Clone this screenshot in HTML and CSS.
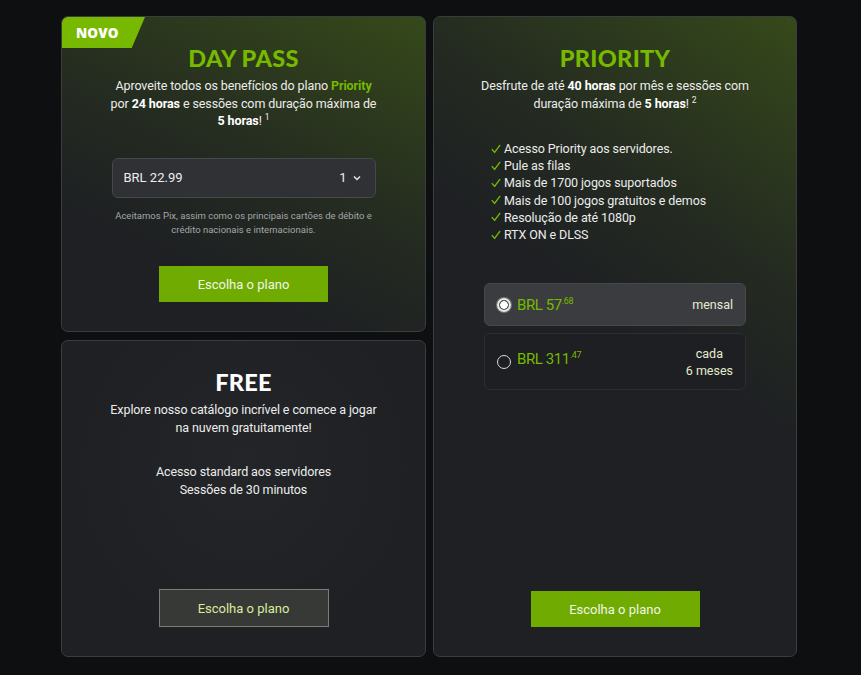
FILE: index.html
```html
<!DOCTYPE html>
<html lang="pt-BR">
<head>
<meta charset="utf-8">
<link rel="stylesheet" href="styles.css">
</head>
<body>
<main class="plans">
  <section class="card card-daypass">
    <div class="badge">NOVO</div>
    <h2 class="title title-green">DAY PASS</h2>
    <p class="desc">Aproveite todos os benefícios do plano <b class="hl">Priority</b><br>por <b>24 horas</b> e sessões com duração máxima de<br><b>5 horas</b>! <sup>1</sup></p>
    <div class="select">
      <span>BRL 22.99</span>
      <span class="qty">1
        <svg width="8" height="6" viewBox="0 0 8 6"><path d="M1 1.5 L4 4.5 L7 1.5" fill="none" stroke="#e6e6e6" stroke-width="1.5"/></svg>
      </span>
    </div>
    <p class="note">Aceitamos Pix, assim como os principais cartões de débito e<br>crédito nacionais e internacionais.</p>
    <button class="btn btn-green">Escolha o plano</button>
  </section>

  <section class="card card-priority">
    <h2 class="title title-green">PRIORITY</h2>
    <p class="desc">Desfrute de até <b>40 horas</b> por mês e sessões com<br>duração máxima de <b>5 horas</b>! <sup>2</sup></p>
    <ul class="features">
      <li><svg class="check" width="10" height="10" viewBox="0 0 10 10"><path d="M1.2 5.6 L3.6 8.4 L8.8 1.4" fill="none" stroke="#76b900" stroke-width="1.4" stroke-linecap="round" stroke-linejoin="round"/></svg>Acesso Priority aos servidores.</li>
      <li><svg class="check" width="10" height="10" viewBox="0 0 10 10"><path d="M1.2 5.6 L3.6 8.4 L8.8 1.4" fill="none" stroke="#76b900" stroke-width="1.4" stroke-linecap="round" stroke-linejoin="round"/></svg>Pule as filas</li>
      <li><svg class="check" width="10" height="10" viewBox="0 0 10 10"><path d="M1.2 5.6 L3.6 8.4 L8.8 1.4" fill="none" stroke="#76b900" stroke-width="1.4" stroke-linecap="round" stroke-linejoin="round"/></svg>Mais de 1700 jogos suportados</li>
      <li><svg class="check" width="10" height="10" viewBox="0 0 10 10"><path d="M1.2 5.6 L3.6 8.4 L8.8 1.4" fill="none" stroke="#76b900" stroke-width="1.4" stroke-linecap="round" stroke-linejoin="round"/></svg>Mais de 100 jogos gratuitos e demos</li>
      <li><svg class="check" width="10" height="10" viewBox="0 0 10 10"><path d="M1.2 5.6 L3.6 8.4 L8.8 1.4" fill="none" stroke="#76b900" stroke-width="1.4" stroke-linecap="round" stroke-linejoin="round"/></svg>Resolução de até 1080p</li>
      <li><svg class="check" width="10" height="10" viewBox="0 0 10 10"><path d="M1.2 5.6 L3.6 8.4 L8.8 1.4" fill="none" stroke="#76b900" stroke-width="1.4" stroke-linecap="round" stroke-linejoin="round"/></svg>RTX ON e DLSS</li>
    </ul>
    <div class="options">
      <label class="option option-selected">
        <span class="radio radio-on"></span>
        <span class="price">BRL 57<sup>.68</sup></span>
        <span class="period">mensal</span>
      </label>
      <label class="option option-tall">
        <span class="radio"></span>
        <span class="price">BRL 311<sup>.47</sup></span>
        <span class="period">cada<br>6 meses</span>
      </label>
    </div>
    <button class="btn btn-green">Escolha o plano</button>
  </section>

  <section class="card card-free">
    <h2 class="title title-white">FREE</h2>
    <p class="desc">Explore nosso catálogo incrível e comece a jogar<br>na nuvem gratuitamente!</p>
    <p class="desc free-features">Acesso standard aos servidores<br>Sessões de 30 minutos</p>
    <button class="btn btn-outline">Escolha o plano</button>
  </section>
</main>
</body>
</html>
```

FILE: styles.css
```css
* { box-sizing: border-box; }
html, body { margin: 0; padding: 0; }
body {
  background: #0e0f10;
  font-family: Roboto, "Liberation Sans", Arial, sans-serif;
  color: #ececec;
  width: 861px;
  height: 675px;
  overflow: hidden;
}
.plans {
  display: grid;
  grid-template-columns: 365px 364px;
  grid-template-rows: 316px 317px;
  column-gap: 7px;
  row-gap: 8px;
  padding: 16px 0 0 61px;
}
.card {
  position: relative;
  background-color: #1e2023;
  border: 1px solid #3a3c3f;
  border-radius: 7px;
  display: flex;
  flex-direction: column;
  align-items: center;
  padding: 26px 0 29px;
  overflow: hidden;
}
.card-daypass {
  grid-column: 1; grid-row: 1;
  background-image: linear-gradient(205deg, rgba(118,185,0,0.27) 0%, rgba(118,185,0,0.08) 45%, rgba(0,0,0,0) 75%);
}
.card-priority {
  grid-column: 2; grid-row: 1 / span 2;
  background-image: linear-gradient(215deg, rgba(118,185,0,0.27) 0%, rgba(118,185,0,0.07) 30%, rgba(0,0,0,0) 48%);
}
.card-free {
  grid-column: 1; grid-row: 2;
  background-image: radial-gradient(ellipse at 50% 40%, #232528 0%, #1e2023 70%);
}
.badge {
  position: absolute;
  left: 0; top: 0;
  width: 83px; height: 31px;
  background: #76b900;
  clip-path: polygon(0 0, 100% 0, 84% 100%, 0 100%);
  color: #fff;
  font-family: "Open Sans", sans-serif;
  font-weight: 800;
  font-size: 13.5px;
  padding: 7px 0 0 14px;
  letter-spacing: 0.1px;
}
.title {
  margin: 0;
  font-family: Lato, "Open Sans", sans-serif;
  font-weight: 900;
  font-size: 23.5px;
  line-height: 30px;
  letter-spacing: 0.3px;
}
.title-green { color: #76b900; }
.title-white { color: #ffffff; }
.desc {
  margin: 4px 0 0;
  font-size: 12.5px;
  letter-spacing: -0.1px;
  line-height: 17.5px;
  text-align: center;
  color: #ececec;
}
.desc b { font-weight: 700; color: #fff; }
.desc .hl { color: #76b900; }
.desc sup { font-size: 8.5px; vertical-align: 5px; line-height: 0; }
.select {
  margin-top: 28px;
  width: 264px;
  height: 40px;
  background: #2f3134;
  border: 1px solid #46484b;
  border-radius: 6px;
  display: flex;
  align-items: center;
  justify-content: space-between;
  padding: 0 14px 0 11px;
  font-size: 13px;
  color: #eee;
}
.qty { display: flex; align-items: center; gap: 6px; }
.note {
  margin: 11px 0 0;
  font-size: 9.5px;
  line-height: 14px;
  color: #a4a6a8;
  text-align: center;
}
.btn {
  margin-top: auto;
  width: 169px;
  height: 36px;
  font-family: inherit;
  font-size: 13px;
  border-radius: 0;
  cursor: pointer;
}
.btn-green {
  background: #6fab00;
  border: none;
  color: #f2f5ea;
}
.btn-outline {
  width: 170px;
  height: 38px;
  background: #363935;
  border: 1px solid #7a7d78;
  color: #dcea9f;
}
.free-features { margin-top: 27px; }
.features {
  list-style: none;
  margin: 28px 0 0;
  padding: 0 0 0 57px;
  align-self: stretch;
  font-size: 12.5px;
  letter-spacing: -0.1px;
  line-height: 17.2px;
  color: #ececec;
}
.check {
  margin-right: 3px;
  vertical-align: -0.5px;
}
.options {
  align-self: stretch;
  margin: 40px 50px 0;
  display: flex;
  flex-direction: column;
  gap: 7px;
}
.option {
  display: flex;
  align-items: center;
  height: 43px;
  padding: 0 12px;
  border-radius: 6px;
  border: 1px solid #2c2e31;
  background: #1d1f22;
}
.option-selected {
  background: #3a3c3f;
  border-color: #46484b;
}
.option-tall { height: 57px; }
.radio {
  width: 14px; height: 14px;
  border-radius: 50%;
  border: 1.5px solid #d8d8d8;
  margin-right: 6px;
  flex: none;
}
.radio-on {
  border: 2px solid #e8e8e8;
  background: radial-gradient(circle, #fff 0 3.5px, #555 4px 100%);
  box-shadow: 0 0 0 1px #777;
}
.price {
  color: #76b900;
  font-size: 15px;
  letter-spacing: -0.4px;
}
.price sup {
  font-size: 9px;
  vertical-align: 6px;
  line-height: 0;
}
.option-tall .price { margin-top: -6px; }
.period {
  margin-left: auto;
  font-size: 12.5px;
  line-height: 17px;
  color: #e6ebcf;
  text-align: center;
}
```
